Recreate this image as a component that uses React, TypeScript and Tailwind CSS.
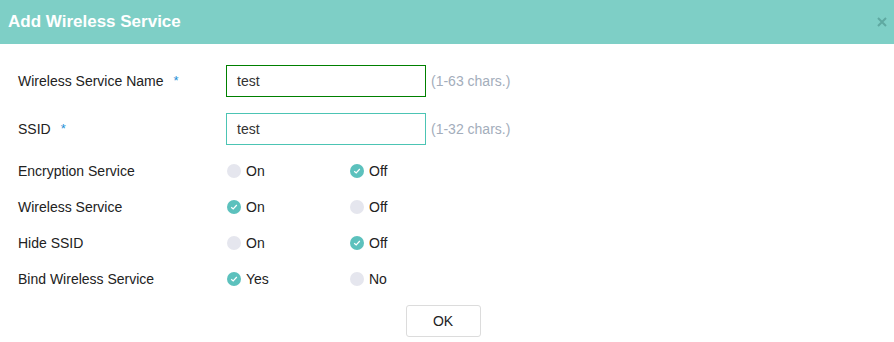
import React from 'react';

type Opt = { label: string; checked: boolean };

const Radio: React.FC<Opt> = ({ label, checked }) => (
  <div className="flex items-center w-[123px]">
    {checked ? (
      <span className="w-[14px] h-[14px] rounded-full bg-[#5cc1bd] flex items-center justify-center">
        <svg width="8" height="8" viewBox="0 0 8 8">
          <path d="M1.2 4.2 L3.2 6 L6.8 2" fill="none" stroke="#ffffff" strokeWidth="1.2" />
        </svg>
      </span>
    ) : (
      <span className="w-[14px] h-[14px] rounded-full bg-[#e5e6ee]" />
    )}
    <span className="ml-[5px] text-[#222]">{label}</span>
  </div>
);

const rows: { label: string; opts: Opt[] }[] = [
  { label: 'Encryption Service', opts: [{ label: 'On', checked: false }, { label: 'Off', checked: true }] },
  { label: 'Wireless Service', opts: [{ label: 'On', checked: true }, { label: 'Off', checked: false }] },
  { label: 'Hide SSID', opts: [{ label: 'On', checked: false }, { label: 'Off', checked: true }] },
  { label: 'Bind Wireless Service', opts: [{ label: 'Yes', checked: true }, { label: 'No', checked: false }] },
];

export default function App() {
  return (
    <div className="w-[894px] h-[342px] bg-white text-[14px] text-[#222] font-['Liberation_Sans',Arial,sans-serif]">
      <div className="h-[44px] bg-[#7ecfc6] flex items-center justify-between pl-[8px] pr-[7px]">
        <h2 className="text-white text-[17px] font-bold">Add Wireless Service</h2>
        <svg width="10" height="10" viewBox="0 0 10 10">
          <path d="M1 1 L9 9 M9 1 L1 9" stroke="#5fa9a1" strokeWidth="2" />
        </svg>
      </div>

      <div className="pl-[18px] pt-[21px]">
        <div className="flex items-center h-[32px] mb-4">
          <div className="w-[208px] flex items-center">
            Wireless Service Name<span className="ml-[10px] text-[13px] text-[#1e90d6]">*</span>
          </div>
          <div className="w-[200px] h-[32px] border border-[#008000] flex items-center pl-[10px] text-[14px] text-[#333]">test</div>
          <span className="ml-[5px] text-[#a3adbb]">(1-63 chars.)</span>
        </div>
        <div className="flex items-center h-[32px]">
          <div className="w-[208px] flex items-center">
            SSID<span className="ml-[10px] text-[13px] text-[#1e90d6]">*</span>
          </div>
          <div className="w-[200px] h-[32px] border border-[#4cc4b4] flex items-center pl-[10px] text-[14px] text-[#333]">test</div>
          <span className="ml-[5px] text-[#a3adbb]">(1-32 chars.)</span>
        </div>

        <div className="mt-2">
          {rows.map((r) => (
            <div key={r.label} className="flex items-center h-[36px]">
              <div className="w-[209px]">{r.label}</div>
              {r.opts.map((o) => (
                <Radio key={o.label} {...o} />
              ))}
            </div>
          ))}
        </div>
      </div>

      <div className="mt-2 flex justify-center pr-[8px]">
        <button className="w-[75px] h-[32px] border border-[#dcdcdc] rounded-[3px] bg-white text-[14px] text-[#222]">OK</button>
      </div>
    </div>
  );
}
